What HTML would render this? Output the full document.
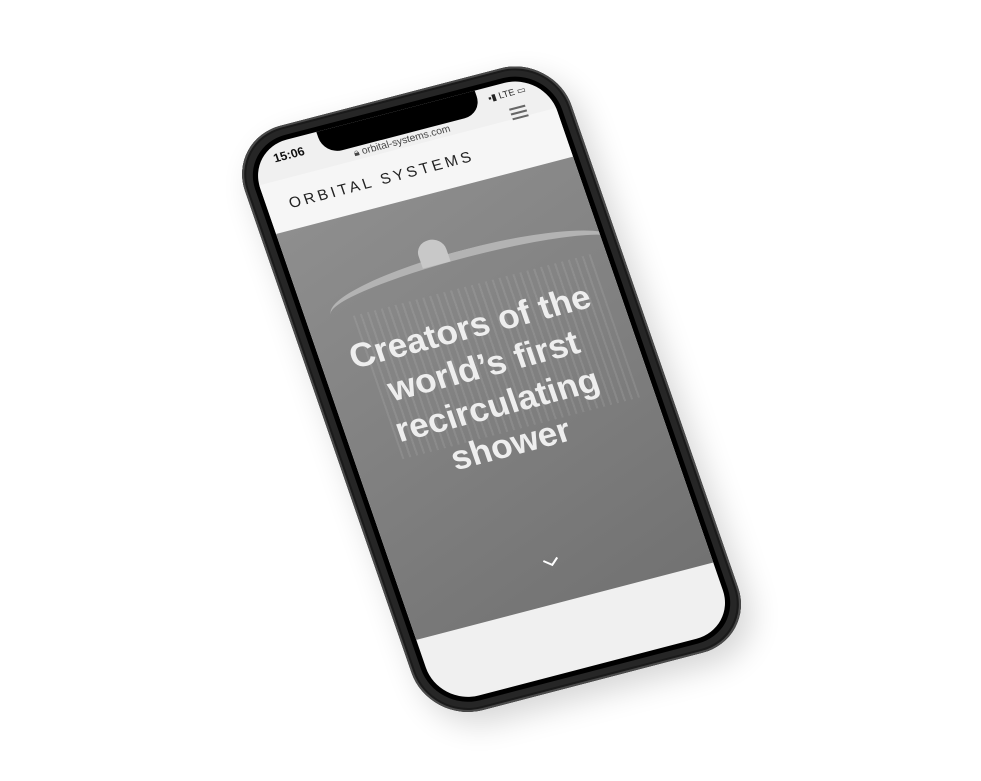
<!DOCTYPE html>
<html><head><meta charset="utf-8"><style>
html,body{margin:0;padding:0;background:#fff;width:981px;height:781px;overflow:hidden;font-family:"Liberation Sans",sans-serif}
#w{position:absolute;left:0;top:0;width:300px;height:580px;transform-origin:0 0;transform:matrix(0.99,-0.258,0.33,0.955,247,150)}
.body{position:absolute;left:-15px;top:-15px;width:330px;height:612px;border-radius:54px;background:#262626;box-shadow:0 0 0 2px #4a4a4a inset,0 0 0 4px #1a1a1a inset,6px 14px 30px rgba(0,0,0,.16)}
.scr{position:absolute;left:0;top:0;width:300px;height:582px;border-radius:40px;overflow:hidden;background:#f0f0f0;box-shadow:0 0 0 5px #000}
.hdr{position:absolute;left:0;top:37px;width:300px;height:52px;background:#f6f6f6}
.img{position:absolute;left:0;top:88px;width:300px;height:425px;background:linear-gradient(160deg,#8e8e8e 0%,#808080 50%,#727272 100%)}
.notch{position:absolute;left:70px;top:-2px;width:160px;height:26px;background:#000;border-radius:0 0 18px 18px}
.t{position:absolute;white-space:nowrap;color:#222}
.h1{position:absolute;left:-10px;width:320px;top:118px;text-align:center;color:#eee;font-weight:bold;font-size:34px;line-height:41px}
</style></head><body>
<div id="w">
<div class="body"></div>
<div class="scr">
<div class="hdr"></div>
<div class="img">
<div style="position:absolute;left:25px;top:62px;width:290px;height:50px;border-radius:50%;border-top:8px solid #bbb;opacity:.85"></div>
<div style="position:absolute;left:125px;top:44px;width:28px;height:26px;border-radius:50% 50% 0 0;background:#c8c8c8"></div>
<div style="position:absolute;left:45px;top:98px;width:240px;height:150px;background:repeating-linear-gradient(90deg,rgba(200,200,200,.22) 0 2px,transparent 2px 7px);opacity:.7"></div>
<div class="h1">Creators of the<br>world’s first<br>recirculating<br>shower</div>
<svg style="position:absolute;left:141px;top:378px" width="18" height="12" viewBox="0 0 18 12"><path d="M2 3 L9 9 L16 3" stroke="#fff" stroke-width="2" fill="none"/></svg>
</div>
<div class="t" style="left:22px;top:8px;font-size:12px;font-weight:bold;color:#111">15:06</div>
<div class="t" style="left:240px;top:6px;font-size:9px;color:#222">▪▮ LTE ▭</div>
<div class="t" style="left:98px;top:25px;font-size:10px;color:#444">🔒︎ orbital-systems.com</div>
<div style="position:absolute;left:256px;top:26px;width:16px;height:2px;background:#666;box-shadow:0 5px 0 #666,0 10px 0 #666"></div>
<div class="t" style="left:22px;top:54px;font-size:15px;letter-spacing:3.2px;color:#222">ORBITAL SYSTEMS</div>
<div class="notch"></div>
</div>
</div>
</body></html>
